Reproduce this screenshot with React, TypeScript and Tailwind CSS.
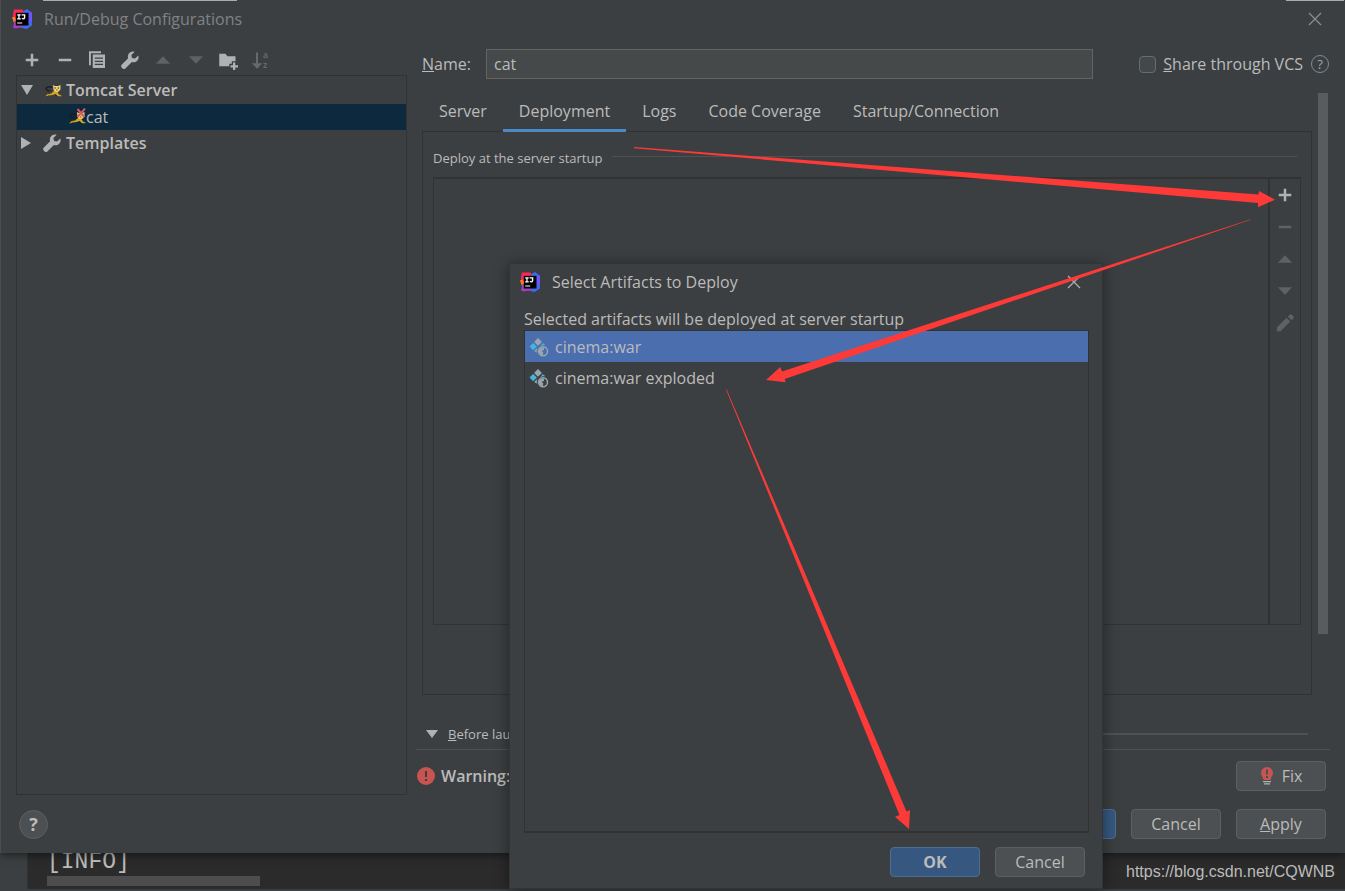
import React, { useState } from 'react';

const TABS = ['Server', 'Deployment', 'Logs', 'Code Coverage', 'Startup/Connection'];
const ARTIFACTS = ['cinema:war', 'cinema:war exploded'];

interface IconProps {
  className?: string;
  children: React.ReactNode;
}

function Icon({ className = 'text-[#afb1b3]', children }: IconProps) {
  return (
    <svg viewBox="0 0 16 16" className={`h-5 w-5 shrink-0 ${className}`} fill="currentColor" aria-hidden="true">
      {children}
    </svg>
  );
}

const AddIcon = () => <Icon><path d="M9 7h4v2H9v4H7V9H3V7h4V3h2z" /></Icon>;
const RemoveIcon = ({ className }: { className?: string }) => <Icon className={className}><path d="M3 7h10v2H3z" /></Icon>;
const UpIcon = () => <Icon className="text-[#5f6162]"><path d="M8 4.9l5.7 6H2.3z" /></Icon>;
const DownIcon = () => <Icon className="text-[#5f6162]"><path d="M8 11l5.7-6H2.3z" /></Icon>;

function WrenchIcon() {
  return (
    <Icon>
      <path d="M14.7 4.3l-2.7 2.5-2.4-.5-.5-2.4 2.6-2.6C10 .8 8.100 1.300 7.100 2.700c-.9 1.200-1 2.600-.6 3.900L1.300 11.800c-.6.6-.6 1.600 0 2.200l.8.8c.6.6 1.600.6 2.200 0l5.200-5.200c1.400.4 3 .2 4.100-.9 1.200-1.200 1.600-2.900 1.100-4.400z" />
    </Icon>
  );
}

function IdeaLogo() {
  return (
    <svg viewBox="0 0 20 20" className="h-5 w-5 shrink-0" aria-hidden="true">
      <path d="M0 8.500l4-2.500 3 6-5 2z" fill="#fc801d" />
      <path d="M2 .5h8.500l2 4L8 12 3.500 9 .8 6.500z" fill="#fe2857" />
      <path d="M11.500 2L15 0l4.500 3.500.5 13-5.500 3.500-8-2z" fill="#3b6df0" />
      <path d="M16 4l4-.5V12l-4 2z" fill="#6b57ff" />
      <path d="M2.500 12H8l4 6-8.500 1.500L1 18.500z" fill="#a23fc0" />
      <rect x="3.800" y="3.800" width="12.700" height="12.700" fill="#000" />
      <path d="M5.200 5.200h3.500v1.200H7.600v2.800h1.100v1.200H5.200V9.200h1.100V6.400H5.200zM9.600 5.200h3.700v3.400c0 1.300-.8 1.900-1.900 1.900-.8 0-1.500-.3-1.900-.8l.8-.9c.6.7 1.600.6 1.600-.3V6.400H9.600zM5.200 13.600h5v1h-5z" fill="#fff" />
    </svg>
  );
}

function TomcatIcon({ broken = false }: { broken?: boolean }) {
  return (
    <svg viewBox="0 0 18 18" className="h-[18px] w-[18px] shrink-0" aria-hidden="true">
      <path d="M6.500 9.500C2 11 1 6.500 3.500 6c1.500-.4 3 .2 4.500 0" fill="none" stroke="#17191b" strokeWidth="1.200" />
      <path d="M1 15.500l3-2.700 4-1 2.500-2.300 3 1.500 1.500 2.500 2.500 1v.8h-3.500L11.500 13l-3 1-3.500.6-3 1.200z" fill="#d2a41f" />
      <path d="M4 12.800l4-1M1 16l4-1.200M11 13.500l2.500 2" stroke="#17191b" strokeWidth=".6" fill="none" />
      <path d="M9 4l1.800 1h3.400L16.500 4v4.500L14 11h-2.500L9.500 9z" fill="#ecd07a" />
      <path d="M10.500 7h1.300M13.700 7H15M12.300 9h1" stroke="#222" strokeWidth="1" />
      {broken && <path d="M9.500 1l7 8M17 .5L9.500 9" stroke="#db5860" strokeWidth="1.900" />}
    </svg>
  );
}

function ArtifactIcon() {
  return (
    <svg viewBox="0 0 20 20" className="h-5 w-5 shrink-0" aria-hidden="true">
      <path d="M9 1l3.900 3.900L9 8.800 5.100 4.900z" fill="#9aa7b0" />
      <path d="M4.200 5.900l3.700 3.700-3.700 3.700L.5 9.600z" fill="#40b6e0" />
      <path d="M13.700 5.900l3 2.600c-2.200-.5-4-.1-5.700 1.200z" fill="#40b6e0" />
      <path d="M8.700 10.500c-1 1.500-1.200 3.200-.6 5.300L5.200 14z" fill="#9aa7b0" />
      <circle cx="14" cy="14.200" r="4.500" fill="none" stroke="#9aa7b0" strokeWidth="1.500" />
      <path d="M9.800 13.200c1.200-1.800 2.500-2.600 4.500-3l1 1.500-.8 1.500-2 .6 1.800 1.700-.5 2.800c-2.500-.4-4-2.200-4-5.100z" fill="#9aa7b0" />
    </svg>
  );
}

function CloseIcon({ className }: { className: string }) {
  return (
    <svg viewBox="0 0 14 14" className={`h-3.5 w-3.5 ${className}`} fill="none" stroke="currentColor" aria-hidden="true">
      <path d="M1 1l12 12M13 1L1 13" strokeWidth="1.200" />
    </svg>
  );
}

interface DialogButtonProps {
  primary?: boolean;
  children: React.ReactNode;
}

function DialogButton({ primary = false, children }: DialogButtonProps) {
  return (
    <button
      type="button"
      className={`flex h-[30px] w-[90px] items-center justify-center gap-2 rounded border ${
        primary ? 'border-[#4c708c] bg-[#365880] font-bold' : 'border-[#5e6060] bg-[#4c5052]'
      }`}
    >
      {children}
    </button>
  );
}

function ConfigurationTree() {
  return (
    <aside className="flex w-[391px] shrink-0 flex-col">
      <div className="flex h-[38px] items-center pt-2">
        <div className="ml-1.5 flex w-[249px] justify-between">
          <button type="button" title="Add"><AddIcon /></button>
          <button type="button" title="Remove"><RemoveIcon /></button>
          <button type="button" title="Copy">
            <Icon>
              <path d="M1.600 1h9.600v1.500H3.100v9.700H1.600z" />
              <path fillRule="evenodd" d="M4.600 3.600h9.800v10.800H4.600zM6.200 6v1h6.600V6zM6.200 8.500v1h6.600v-1zM6.200 11v1h6.600v-1z" />
            </Icon>
          </button>
          <button type="button" title="Edit templates"><WrenchIcon /></button>
          <button type="button" title="Move up"><UpIcon /></button>
          <button type="button" title="Move down"><DownIcon /></button>
          <button type="button" title="New folder">
            <Icon>
              <path d="M1 3h5l1.500 2H14v4h-3v2H9v2H1z" />
              <path d="M12 10h1.800v2.200H16V14h-2.200v2H12v-2h-2v-1.800h2z" />
            </Icon>
          </button>
          <button type="button" title="Sort">
            <Icon className="font-['Liberation_Sans',sans-serif] text-[#66696b]">
              <path d="M4 2h1.600v8.500H9L4.800 15 .8 10.500H4z" />
              <text x="9.500" y="6.600" fontSize="7" fontWeight="700">a</text>
              <text x="9.500" y="14.600" fontSize="7" fontWeight="700">z</text>
            </Icon>
          </button>
        </div>
      </div>
      <ul className="flex-1 border border-[#323232]">
        <li className="flex h-7 items-center font-semibold">
          <svg viewBox="0 0 12 10" className="ml-1 h-2.5 w-3 fill-[#afb1b3]" aria-hidden="true"><path d="M0 0h12L6 10z" /></svg>
          <span className="mr-1 ml-[11px]"><TomcatIcon /></span>
          Tomcat Server
        </li>
        <li className="flex h-[26px] items-center bg-[#0d293e] pl-[51px]">
          <TomcatIcon broken />
          cat
        </li>
        <li className="flex h-[26px] items-center font-semibold">
          <svg viewBox="0 0 10 12" className="ml-1 h-3 w-2.5 fill-[#afb1b3]" aria-hidden="true"><path d="M0 0v12l10-6z" /></svg>
          <span className="mr-1 ml-[11px]"><WrenchIcon /></span>
          Templates
        </li>
      </ul>
    </aside>
  );
}

function DeploymentPanel() {
  return (
    <section className="flex h-[564px] flex-col border border-[#323232] px-2.5 pt-3.5 pb-[69px]">
      <div className="flex h-6 items-center gap-2.5 text-[13px]">
        Deploy at the server startup
        <span className="mr-1 mb-1 h-px flex-1 bg-[#515151]" />
      </div>
      <div className="mt-[7px] flex flex-1 border border-t-2 border-[#323232]">
        <div className="flex-1" />
        <div className="flex w-8 flex-col items-center gap-3 border-l-2 border-[#323232] pt-1.5">
          <button type="button" title="Add"><AddIcon /></button>
          <button type="button" title="Remove"><RemoveIcon className="text-[#5f6162]" /></button>
          <button type="button" title="Up"><UpIcon /></button>
          <button type="button" title="Down"><DownIcon /></button>
          <button type="button" title="Edit">
            <Icon className="text-[#5f6162]">
              <path d="M1.500 11.500l7.700-7.700 3 3-7.700 7.700h-3zM10.200 2.800l1.500-1.500c.5-.5 1.200-.5 1.700 0l1.300 1.300c.5.5.5 1.200 0 1.700l-1.500 1.500z" />
            </Icon>
          </button>
        </div>
      </div>
    </section>
  );
}

function ConfigurationEditor() {
  const [name, setName] = useState('cat');
  const [shared, setShared] = useState(false);
  const [tab, setTab] = useState('Deployment');

  return (
    <main className="min-w-0 flex-1">
      <div className="ml-1.5 flex items-center pt-3">
        <label htmlFor="name" className="w-16"><u>N</u>ame:</label>
        <input
          id="name"
          value={name}
          onChange={(e) => setName(e.target.value)}
          className="h-[30px] min-w-0 flex-1 border border-[#646464] bg-[#45494a] px-[7px] outline-none"
        />
        <label className="ml-[46px] flex items-center gap-[7px]">
          <input
            type="checkbox"
            checked={shared}
            onChange={(e) => setShared(e.target.checked)}
            className="h-[17px] w-[17px] appearance-none rounded-sm border border-[#6b6b6b] bg-[#43494a]"
          />
          <span><u>S</u>hare through VCS</span>
        </label>
        <button type="button" title="Help" className="mr-4 ml-2 h-[18px] w-[18px] rounded-full border border-[#7f8b91] text-[13px] leading-4 text-[#9aa7b0]">
          ?
        </button>
      </div>
      <div className="flex">
        <div className="ml-1.5 min-w-0 flex-1">
          <nav className="mt-3 flex h-10 pl-px">
            {TABS.map((t) => (
              <button
                key={t}
                type="button"
                onClick={() => setTab(t)}
                className={`relative px-4 ${t === tab ? 'after:absolute after:inset-x-0 after:-bottom-px after:h-[3px] after:bg-[#4a88c7]' : ''}`}
              >
                {t}
              </button>
            ))}
          </nav>
          <DeploymentPanel />
        </div>
        <div className="mt-3.5 mr-[17px] ml-1.5 h-[541px] w-2.5 bg-[#595b5d]" />
      </div>
      <div className="mt-7 ml-2.5 flex h-[22px] items-center text-[13px]">
        <svg viewBox="0 0 12 8" className="mr-2.5 h-2 w-3 fill-[#afb1b3]" aria-hidden="true"><path d="M0 0h12L6 8z" /></svg>
        <span><u>B</u>efore launch</span>
        <span className="mr-[37px] ml-2 h-0.5 flex-1 bg-[#515151]" />
      </div>
      <div className="mt-1 mr-[15px] flex h-[46px] items-center border-t border-[#515151] pt-[7px] pr-1 pl-px">
        <svg viewBox="0 0 18 18" className="mr-1.5 h-[18px] w-[18px]" aria-hidden="true">
          <circle cx="9" cy="9" r="9" fill="#c75450" />
          <path d="M8 4h2v6H8zM8 12h2v2H8z" fill="#3c3f41" />
        </svg>
        <strong className="flex-1 font-semibold">Warning:</strong>
        <DialogButton>
          <svg viewBox="0 0 14 18" className="h-[18px] w-3.5" aria-hidden="true">
            <path d="M7 0a6 6 0 0 0-6 6c0 2.500 2 4 2.500 7h7C11 10 13 8.500 13 6a6 6 0 0 0-6-6z" fill="#c75450" />
            <path d="M6 2.500h2v5H6zM6 9h2v2H6z" fill="#4c5052" />
            <path d="M3 14h8v1.200H3zM4 16.300h6v1.200H4z" fill="#afb1b3" />
          </svg>
          Fix
        </DialogButton>
      </div>
    </main>
  );
}

function RunDebugWindow() {
  return (
    <div className="relative border-l border-[#4b4d4f] bg-[#3c3f41] shadow-[0_2px_8px_rgba(0,0,0,0.5)]">
      {/* edges of the editor that stick out above the window */}
      <span className="absolute top-0 left-[42px] h-px w-[194px] bg-[#a9abad]" />
      <span className="absolute top-0 right-px h-px w-[58px] bg-[#a9abad]" />
      <header className="flex h-[37px] items-center pr-[23px] pl-[11px] text-[#808284]">
        <IdeaLogo />
        <h1 className="ml-3 flex-1">Run/Debug Configurations</h1>
        <button type="button" title="Close"><CloseIcon className="text-[#8c8e90]" /></button>
      </header>
      <div className="flex gap-[9px] pl-[15px]">
        <ConfigurationTree />
        <ConfigurationEditor />
      </div>
      <footer className="flex items-center gap-[15px] py-3.5 pr-[19px] pl-[18px]">
        <button type="button" title="Help" className="mr-auto h-[29px] w-[29px] rounded-full border border-[#5e6060] bg-[#4c5052] text-lg leading-none font-bold">
          ?
        </button>
        <DialogButton primary>OK</DialogButton>
        <DialogButton>Cancel</DialogButton>
        <DialogButton><span><u>A</u>pply</span></DialogButton>
      </footer>
    </div>
  );
}

function ArtifactsDialog() {
  const [selected, setSelected] = useState(ARTIFACTS[0]);

  return (
    <div
      role="dialog"
      aria-label="Select Artifacts to Deploy"
      className="absolute top-[263px] left-[509px] flex h-[626px] w-[594px] flex-col border border-[#323436] bg-[#3c3f41] pr-[13px] pb-[11px] pl-3.5 shadow-[0_2px_14px_rgba(0,0,0,0.45)]"
    >
      <header className="-ml-1 flex h-9 items-center pr-2">
        <IdeaLogo />
        <h2 className="ml-3 flex-1">Select Artifacts to Deploy</h2>
        <button type="button" title="Close"><CloseIcon className="text-[#afb1b3]" /></button>
      </header>
      <p className="mt-[7px] h-[23px]">Selected artifacts will be deployed at server startup</p>
      <ul className="flex-1 border border-b-2 border-[#323232]">
        {ARTIFACTS.map((a) => (
          <li key={a}>
            <button
              type="button"
              onClick={() => setSelected(a)}
              className={`flex h-[31px] w-full items-center gap-1.5 pl-1 ${a === selected ? 'bg-[#4b6eaf]' : ''}`}
            >
              <ArtifactIcon />
              {a}
            </button>
          </li>
        ))}
      </ul>
      <footer className="flex justify-end gap-[15px] pt-3.5 pr-1">
        <DialogButton primary>OK</DialogButton>
        <DialogButton>Cancel</DialogButton>
      </footer>
    </div>
  );
}

function Arrows() {
  return (
    <svg width="1345" height="891" className="pointer-events-none absolute top-0 left-0" fill="#fe3a38" aria-hidden="true">
      <path d="M634 147L1258.500 194.500 1259 191 1275 199.700 1258 207.300 1258 203 634 148.200z" />
      <path d="M1250 219.500L782 371.500 780.300 367 766 380 785.500 382.300 784.700 379 1250 220z" />
      <path d="M726.500 389L906.500 811.500 910 810 909 829 895 816.700 899.500 815 726 389.500z" />
    </svg>
  );
}

export default function App() {
  return (
    <div className="relative flex min-h-screen flex-col overflow-hidden bg-[#2b2b2b] font-['Open_Sans','Noto_Sans',sans-serif] text-[16px] leading-6 text-[#bbbbbb]">
      <RunDebugWindow />
      <div className="flex h-[38px] overflow-hidden border-b-2 border-[#3c3f41]">
        <div className="w-7 border-r border-[#323232] bg-[#3c3f41]" />
        <div className="flex-1 pl-[19px] font-['Liberation_Mono',monospace] text-[23px]">
          <p className="h-[23px] leading-[18px]">[INFO]</p>
          <div className="h-2.5 w-[213px] bg-[#4d4d4d]" />
        </div>
        <p className="pt-[7px] pr-2.5 font-['Liberation_Sans',sans-serif] text-[16px]">https://blog.csdn.net/CQWNB</p>
      </div>
      <ArtifactsDialog />
      <Arrows />
    </div>
  );
}
